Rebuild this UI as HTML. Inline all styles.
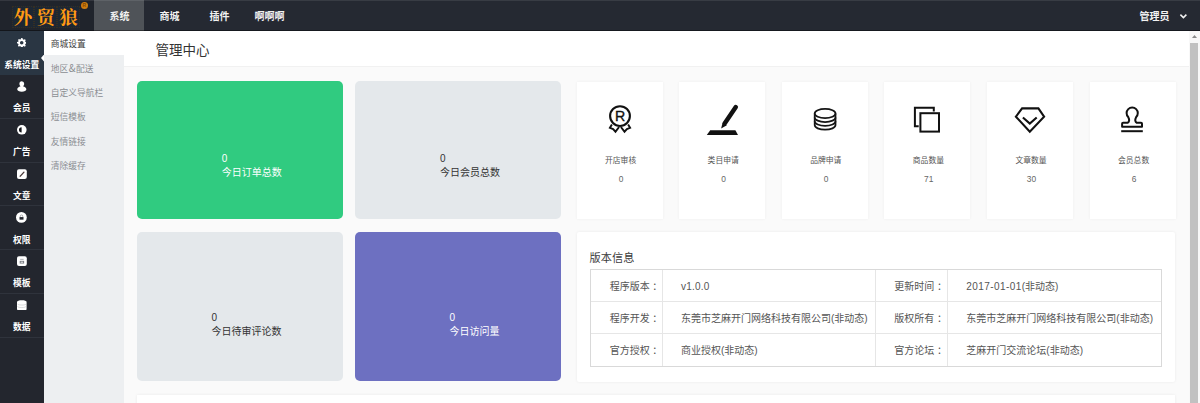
<!DOCTYPE html>
<html lang="zh-CN">
<head>
<meta charset="utf-8">
<title>管理中心</title>
<style>
*{box-sizing:border-box;margin:0;padding:0}
html,body{width:1200px;height:403px;overflow:hidden;background:#fafafa;
  font-family:"Liberation Sans","Noto Sans CJK SC",sans-serif;}
body{position:relative}
.abs{position:absolute}
/* ---------- top bar ---------- */
#top{left:0;top:0;width:1200px;height:31px;background:#252932}
#logo{left:0;top:0;width:94px;height:31px;background:#20242c}
.lg{top:5.5px;width:22.6px;height:22.4px;background:#1d2733;border:1px dotted #352e22;
  color:#ff9a14;font-family:"Liberation Serif","Noto Serif CJK SC",serif;font-weight:700;
  font-size:18.5px;line-height:23px;text-align:center}
#reg{left:80.8px;top:2px;width:7.2px;height:7.2px;border-radius:50%;background:#cf7d10;
  color:#8a4a00;font-size:5px;line-height:7.2px;text-align:center;font-weight:bold}
.tab{top:0;width:50px;height:31px;color:#f2f2f2;font-size:10px;line-height:33px;text-align:center;font-weight:bold}
.tab.on{background:#4f5358}
#admin{left:1139.5px;top:0;height:31px;line-height:33px;font-size:10px;color:#f2f2f2;font-weight:bold}
/* ---------- left dark sidebar ---------- */
#side{left:0;top:31.4px;width:43.5px;height:373px;background:#23262e}
.si{left:0;width:43.5px;height:43.75px;border-bottom:1px solid #2f333c;color:#fff;font-size:8.75px;
  text-align:center;font-weight:bold}
.si.on{background:#2a3643;border-bottom-color:#2a3643}
.si .ic{position:absolute;left:16.8px;top:6.3px;width:10px;height:10px}
.si.on .ic{left:17.1px;top:6.6px;width:9.4px;height:9.4px}
.si .tx{position:absolute;left:-10px;width:63.5px;top:27.3px;line-height:12px;white-space:nowrap}
/* ---------- secondary sidebar ---------- */
#sub{left:43.5px;top:31px;width:80.2px;height:373px;background:#edeff1}
.sb{left:0;width:80.2px;height:24.4px;line-height:26px;padding-left:7.2px;font-size:8.75px;color:#8a8d92;white-space:nowrap}
.sb.on{background:#fff;color:#3a3a3a}
/* ---------- main ---------- */
#head{left:123.7px;top:31px;width:1065px;height:35.7px;background:#fff;border-bottom:1px solid #f1f1f1}
#title{left:155.4px;top:40.5px;font-size:13.5px;line-height:20px;color:#333;white-space:nowrap}
.card{border-radius:5px;font-size:10px;line-height:13.9px;white-space:nowrap}
.wc{top:81.5px;width:86px;height:137px;background:#fff;box-shadow:0 0 3px rgba(0,0,0,.05);text-align:center}
.wc .lb{position:absolute;left:1px;width:100%;top:74.1px;font-size:7.8px;line-height:10px;color:#555}
.wc .nm{position:absolute;left:1.4px;width:100%;top:92.8px;font-size:8.4px;line-height:10px;color:#666}
.wc svg{position:absolute;left:26.8px;top:20px;width:32px;height:36px;overflow:visible}
#ver{left:576.8px;top:232px;width:598.5px;height:149.5px;background:#fff;box-shadow:0 0 3px rgba(0,0,0,.07);border-radius:2px}
#vt{left:589.6px;top:250px;font-size:11.2px;line-height:16px;color:#3c3c3c;white-space:nowrap}
#tb{left:589.5px;top:268.8px;width:572.2px;height:98.4px;border:1px solid #d9d9d9}
.hl{left:0;width:570.2px;height:1px;background:#e6e6e6}
.vl{top:0;width:1px;height:96.4px;background:#e6e6e6}
  .tc{font-size:10px;line-height:14px;color:#555;white-space:nowrap}
#scroll{left:1189px;top:31px;width:11px;height:373px;background:#f8f8f8}
#thumb{left:1190px;top:42.5px;width:8px;height:361px;background:#c1c1c1}
</style>
</head>
<body>
<!-- top bar -->
<div id="top" class="abs"></div>
<div id="logo" class="abs"></div>
<div class="abs lg" style="left:11.6px">外</div>
<div class="abs lg" style="left:34.4px">贸</div>
<div class="abs lg" style="left:57.2px">狼</div>
<div id="reg" class="abs">R</div>
<div class="abs tab on" style="left:94.4px">系统</div>
<div class="abs tab" style="left:144.6px">商城</div>
<div class="abs tab" style="left:194.5px">插件</div>
<div class="abs tab" style="left:244.5px">啊啊啊</div>
<div id="admin" class="abs">管理员</div>
<svg class="abs" style="left:1179px;top:12.9px" width="9" height="7" viewBox="0 0 9 7"><path d="M1.4 1.6 L4.4 4.6 L7.4 1.6" fill="none" stroke="#f2f2f2" stroke-width="1.5"/></svg>

<div class="abs" style="left:0;top:0;width:1200px;height:1px;background:rgba(255,255,255,.09)"></div>
<div class="abs" style="left:0;top:29.8px;width:1200px;height:1.2px;background:rgba(0,0,0,.38)"></div>

<!-- dark sidebar -->
<div id="side" class="abs">
  <div class="abs si on" style="top:0">
    <svg class="ic" viewBox="0 0 20 20"><path fill="#fff" d="M10 0l2 .3.600 2.600 1.700.8 2.300-1.300 2 2-1.300 2.300.8 1.700 2.600.6v2.800l-2.600.6-.8 1.700 1.300 2.300-2 2-2.300-1.300-1.700.8-.6 2.600H8.600l-.6-2.600-1.700-.8-2.300 1.300-2-2 1.300-2.300-.8-1.700L0 11.400V8.600l2.600-.6.8-1.700L2.100 4l2-2 2.300 1.300 1.700-.8L8.600.3zM10 6.200a3.800 3.800 0 100 7.600 3.800 3.800 0 000-7.600z"/></svg>
    <div class="tx">系统设置</div>
  </div>
  <div class="abs si" style="top:43.750px">
    <svg class="ic" style="left:17.300px;top:5.400px;width:9.600px;height:11.200px" viewBox="0 0 20 23"><path fill="#fff" d="M10 .5a5 5.300 0 015 5.300c0 2.100-1 4-2.500 5 4 .9 7 3.400 7 6.700 0 2.600-4.200 4.500-9.500 4.500S.5 20.100.5 17.500c0-3.300 3-5.800 7-6.700C6 9.800 5 7.900 5 5.800A5 5.300 0 0110 .5z"/></svg>
    <div class="tx">会员</div>
  </div>
  <div class="abs si" style="top:87.500px">
    <svg class="ic" style="left:17.300px;top:6.600px;width:9.600px;height:9.600px" viewBox="0 0 20 20"><circle cx="10" cy="10" r="10" fill="#fff"/><path fill="#15171c" d="M9.600 4.500a5.500 5.500 0 000 11z"/></svg>
    <div class="tx">广告</div>
  </div>
  <div class="abs si" style="top:131.250px">
    <svg class="ic" style="left:17px;top:6.200px;width:9.800px;height:10.200px" viewBox="0 0 20 20"><rect x="0" y="0" width="20" height="20" rx="4" fill="#fff"/><path stroke="#4a3a3a" stroke-width="2.800" stroke-linecap="round" d="M14.200 6L7.200 13.600"/><path fill="#4a3a3a" d="M5.200 15.800l.6-3 2.200 2.200z"/></svg>
    <div class="tx">文章</div>
  </div>
  <div class="abs si" style="top:175px">
    <svg class="ic" style="left:16.300px;top:5.700px;width:10.800px;height:10.800px" viewBox="0 0 20 20"><circle cx="10" cy="10" r="10" fill="#fff"/><path fill="#23262e" d="M6.500 9.400h7.400v4.800H6.500z"/><path fill="none" stroke="#8a8c90" stroke-width="1.300" d="M7.900 9.400V7.800a2.300 2.300 0 014.600 0v1.600"/></svg>
    <div class="tx">权限</div>
  </div>
  <div class="abs si" style="top:218.750px">
    <svg class="ic" style="left:17px;top:6.100px;width:9.800px;height:10.200px" viewBox="0 0 20 20"><rect x="0" y="0" width="20" height="20" rx="4" fill="#fff"/><path fill="#9a9ca0" d="M6.500 5.500h7v1.600h-7z"/><path fill="#777a80" d="M5.500 9.500h9v5.500h-9z"/><path fill="#fff" d="M7.500 11.300h5v1.800h-5z"/></svg>
    <div class="tx">模板</div>
  </div>
  <div class="abs si" style="top:262.500px">
    <svg class="ic" style="left:17.300px;top:5.700px;width:9.600px;height:10.900px" viewBox="0 0 20 22"><path fill="#fff" d="M10 0c5.500 0 10 1.400 10 3.200v15.600c0 1.800-4.500 3.200-10 3.200S0 20.600 0 18.800V3.200C0 1.400 4.500 0 10 0z"/><path fill="none" stroke="#b9bbbf" stroke-width="1.100" d="M1 7.600c0 1.500 4 2.600 9 2.600s9-1.100 9-2.600M1 12.800c0 1.500 4 2.600 9 2.600s9-1.100 9-2.600"/></svg>
    <div class="tx">数据</div>
  </div>
</div>
<!-- notch -->
<svg class="abs" style="left:40.500px;top:54px" width="3.500" height="8" viewBox="0 0 3.500 8"><path d="M3.500 0v8L0 4z" fill="#fff"/></svg>

<!-- secondary sidebar -->
<div id="sub" class="abs">
  <div class="abs sb on" style="top:0">商城设置</div>
  <div class="abs sb" style="top:24.400px">地区<span style="font-family:'Noto Sans CJK SC',sans-serif;font-size:10px;padding:0 .5px">&amp;</span>配送</div>
  <div class="abs sb" style="top:48.800px">自定义导航栏</div>
  <div class="abs sb" style="top:73.200px">短信模板</div>
  <div class="abs sb" style="top:97.600px">友情链接</div>
  <div class="abs sb" style="top:122px">清除缓存</div>
</div>

<!-- header -->
<div id="head" class="abs"></div>
<div id="title" class="abs">管理中心</div>

<!-- big cards -->
<div class="abs card" style="left:137.200px;top:81.300px;width:205.600px;height:137.300px;background:#30cb80;color:#fff">
  <div class="abs" style="left:84.600px;top:70.700px">0<br>今日订单总数</div>
</div>
<div class="abs card" style="left:355.300px;top:81.300px;width:205.600px;height:137.300px;background:#e4e8eb;color:#333">
  <div class="abs" style="left:84.600px;top:70.700px">0<br>今日会员总数</div>
</div>
<div class="abs card" style="left:137.200px;top:231.600px;width:205.600px;height:149.400px;background:#e4e8eb;color:#333">
  <div class="abs" style="left:74.400px;top:79.500px">0<br>今日待审评论数</div>
</div>
<div class="abs card" style="left:355.300px;top:231.600px;width:205.600px;height:149.400px;background:#6d70c1;color:#fff">
  <div class="abs" style="left:94.100px;top:79.500px">0<br>今日访问量</div>
</div>

<!-- small white cards -->
<div class="abs wc" style="left:576.600px">
  <svg viewBox="0 0 32 36"><g fill="none" stroke="#111" stroke-width="2.1" stroke-linejoin="miter"><circle cx="17" cy="14.100" r="9.900"/><path stroke-width="1.900" d="M8.900 22.400L6.900 25.800 10.100 27 12.500 29.700 16.100 25M25.100 22.400L27.100 25.800 23.900 27 21.500 29.700 17.900 25"/></g><text x="17.200" y="19.100" font-family="Liberation Sans,sans-serif" font-size="14.200" text-anchor="middle" fill="#111" stroke="#111" stroke-width=".35">R</text></svg>
  <div class="lb">开店审核</div><div class="nm">0</div>
</div>
<div class="abs wc" style="left:679.200px">
  <svg viewBox="0 0 32 36"><path d="M29.800 5L18.800 21.300" stroke="#111" stroke-width="4.500" stroke-linecap="round" fill="none"/><path d="M16.700 20.400l4.200 2.800-5.800 3.400z" fill="#111"/><path d="M4.200 28.300h25.200l2.600 4.800H.8z" fill="#111"/></svg>
  <div class="lb">类目申请</div><div class="nm">0</div>
</div>
<div class="abs wc" style="left:781.800px">
  <svg viewBox="0 0 32 36"><g fill="none" stroke="#151515" stroke-width="1.75"><ellipse cx="16.100" cy="11.500" rx="10.400" ry="4.600"/><path d="M5.700 11.500v11.600c0 2.500 4.600 4.600 10.400 4.600s10.400-2.100 10.400-4.600V11.500"/><path d="M5.700 15.400c0 2.500 4.600 4.600 10.400 4.600s10.400-2.100 10.400-4.600M5.700 19.300c0 2.500 4.600 4.600 10.400 4.600s10.400-2.100 10.400-4.600"/></g></svg>
  <div class="lb">品牌申请</div><div class="nm">0</div>
</div>
<div class="abs wc" style="left:884.400px">
  <svg viewBox="0 0 32 36"><g fill="none" stroke="#111" stroke-width="2"><rect x="9.400" y="11.200" width="18.600" height="18.400"/><path d="M7.700 24.200H3.900V5.800h18.900v3.700"/></g></svg>
  <div class="lb">商品数量</div><div class="nm">71</div>
</div>
<div class="abs wc" style="left:987px">
  <svg viewBox="0 0 32 36"><g fill="none" stroke="#111" stroke-width="2.100" stroke-linejoin="miter"><path d="M8.100 6.400H24.400L30.100 14.700 15.800 29.800 1.900 14.700z"/><path d="M8.900 15.500l6.900 6.100 6.900-6.100"/></g></svg>
  <div class="lb">文章数量</div><div class="nm">30</div>
</div>
<div class="abs wc" style="left:1089.600px">
  <svg viewBox="0 0 32 36"><g fill="none" stroke="#111" stroke-width="2" stroke-linejoin="round"><path d="M6.100 24.700V21.800Q6.100 20.800 7.100 20.800H11.600C13.400 19.800 13.600 17.800 12.200 15A5.600 5.600 0 1 1 20.200 15C18.800 17.800 19 19.800 20.800 20.800H25Q26 20.800 26 21.800V24.700Z"/><path d="M5.200 29.200h21.600" stroke-width="2"/></g></svg>
  <div class="lb">会员总数</div><div class="nm">6</div>
</div>

<!-- version panel -->
<div id="ver" class="abs"></div>
<div id="vt" class="abs">版本信息</div>
<div id="tb" class="abs">
  <div class="abs hl" style="top:31.700px"></div>
  <div class="abs hl" style="top:63.700px"></div>
  <div class="abs vl" style="left:71.800px"></div>
  <div class="abs vl" style="left:284.700px"></div>
  <div class="abs vl" style="left:356.800px"></div>
  <div class="abs tc" style="left:19.200px;top:10px">程序版本<span style="padding-left:2.6px">：</span></div>
  <div class="abs tc" style="left:90.500px;top:10px"><span style="letter-spacing:.2px">v1.0.0</span></div>
  <div class="abs tc" style="left:303.800px;top:10px">更新时间<span style="padding-left:2.6px">：</span></div>
  <div class="abs tc" style="left:375.800px;top:10px"><span style="letter-spacing:.42px">2017-01-01</span>(非动态)</div>
  <div class="abs tc" style="left:19.200px;top:42.500px">程序开发<span style="padding-left:2.6px">：</span></div>
  <div class="abs tc" style="left:90.500px;top:42.500px">东莞市芝麻开门网络科技有限公司(非动态)</div>
  <div class="abs tc" style="left:303.800px;top:42.500px">版权所有<span style="padding-left:2.6px">：</span></div>
  <div class="abs tc" style="left:375.800px;top:42.500px">东莞市芝麻开门网络科技有限公司(非动态)</div>
  <div class="abs tc" style="left:19.200px;top:74.600px">官方授权<span style="padding-left:2.6px">：</span></div>
  <div class="abs tc" style="left:90.500px;top:74.600px">商业授权(非动态)</div>
  <div class="abs tc" style="left:303.800px;top:74.600px">官方论坛<span style="padding-left:2.6px">：</span></div>
  <div class="abs tc" style="left:375.800px;top:74.600px">芝麻开门交流论坛(非动态)</div>
</div>

<!-- bottom panel peek -->
<div class="abs" style="left:137.200px;top:395.200px;width:1038px;height:20px;background:#fff;box-shadow:0 0 3px rgba(0,0,0,.07)"></div>

<!-- scrollbar -->
<div id="scroll" class="abs"></div>
<div id="thumb" class="abs"></div>
<svg class="abs" style="left:1190.500px;top:34px" width="7" height="5" viewBox="0 0 7 5"><path d="M3.500 1L6 4H1z" fill="#8a8a8a"/></svg>
</body>
</html>
